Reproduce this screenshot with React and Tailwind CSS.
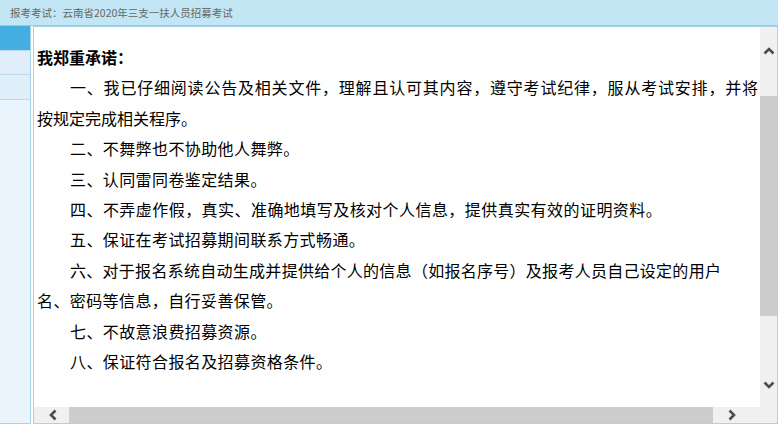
import React from "react";

const lines = [
  { text: "一、我已仔细阅读公告及相关文件，理解且认可其内容，遵守考试纪律，服从考试安排，并将", indent: true, cls: "tracking-[0.8px]" },
  { text: "按规定完成相关程序。", indent: false, cls: "" },
  { text: "二、不舞弊也不协助他人舞弊。", indent: true, cls: "tracking-[0.4px]" },
  { text: "三、认同雷同卷鉴定结果。", indent: true, cls: "tracking-[0.4px]" },
  { text: "四、不弄虚作假，真实、准确地填写及核对个人信息，提供真实有效的证明资料。", indent: true, cls: "tracking-[0.45px]" },
  { text: "五、保证在考试招募期间联系方式畅通。", indent: true, cls: "tracking-[0.4px]" },
  { text: "六、对于报名系统自动生成并提供给个人的信息（如报名序号）及报考人员自己设定的用户", indent: true, cls: "tracking-[0.28px]" },
  { text: "名、密码等信息，自行妥善保管。", indent: false, cls: "tracking-[0.4px]" },
  { text: "七、不故意浪费招募资源。", indent: true, cls: "tracking-[0.4px]" },
  { text: "八、保证符合报名及招募资格条件。", indent: true, cls: "tracking-[0.4px]" },
];

const Chevron = ({ dir }) => {
  const d = {
    up: "M1.5 8.5 L6 4 L10.5 8.5",
    down: "M1.5 3.5 L6 8 L10.5 3.5",
    left: "M8.5 1.5 L4 6 L8.5 10.5",
    right: "M3.5 1.5 L8 6 L3.5 10.5",
  }[dir];
  return (
    <svg width="12" height="12" viewBox="0 0 12 12">
      <path d={d} fill="none" stroke="#4d4d4d" strokeWidth="2.6" />
    </svg>
  );
};

const App = () => {
  return (
    <div className="w-[778px] h-[433px] bg-white overflow-hidden flex flex-col font-['Noto_Sans_CJK_SC',sans-serif]">
      {/* top title bar */}
      <div className="h-[25px] bg-[#c2e6f4] flex items-center pl-[10px] text-[10.5px] text-[#666] shrink-0">
        报考考试：云南省2020年三支一扶人员招募考试
      </div>
      <div className="h-[1px] bg-[#9cc9dc] shrink-0"></div>

      <div className="flex h-[398px]">
        {/* sidebar */}
        <div className="w-[31px] h-full bg-[#eaf4fc] border-r border-b border-[#a8d4ea] flex flex-col">
          <div className="h-[25px] bg-[#45aee0] border-b border-[#b9d9ee]"></div>
          <div className="h-[24px] bg-[#e0eef9] border-b border-[#b9d9ee]"></div>
          <div className="h-[25px] bg-[#e0eef9] border-b border-[#b9d9ee]"></div>
        </div>

        {/* content panel */}
        <div className="ml-[2px] flex-1 h-full border border-[#a8d4ea] flex flex-col">
          <div className="flex flex-1 min-h-0">
            <div className="flex-1 pt-[15px] pl-[3px] text-[16px] leading-[30.4px] text-black overflow-hidden">
              <div className="font-bold">我郑重承诺：</div>
              {lines.map((l, i) => (
                <div key={i} className={`whitespace-nowrap ${l.indent ? "pl-[33px]" : ""} ${l.cls}`}>
                  {l.text}
                </div>
              ))}
            </div>
            {/* vertical scrollbar */}
            <div className="w-[17px] bg-[#f0f0f0] flex flex-col items-center">
              <div className="h-[31px] flex items-end justify-center pb-[1px]">
                <Chevron dir="up" />
              </div>
              <div className="h-[38px]"></div>
              <div className="w-[17px] h-[220px] bg-[#cdcdcd]"></div>
              <div className="flex-1"></div>
              <div className="h-[28px] flex items-start justify-center">
                <Chevron dir="down" />
              </div>
            </div>
          </div>
          {/* horizontal scrollbar */}
          <div className="h-[16px] bg-[#f0f0f0] flex items-center">
            <div className="w-[35px] flex justify-end pr-[10px]">
              <Chevron dir="left" />
            </div>
            <div className="w-[644px] h-full bg-[#cdcdcd]"></div>
            <div className="flex-1 flex justify-end pr-[39px]">
              <Chevron dir="right" />
            </div>
          </div>
        </div>
      </div>
    </div>
  );
};

export default App;
